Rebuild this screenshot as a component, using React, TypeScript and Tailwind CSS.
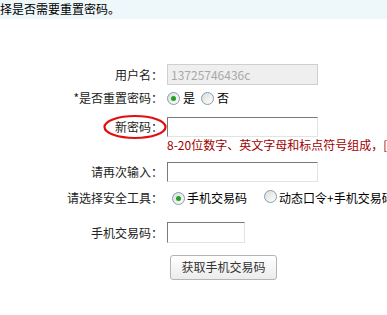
import React from "react";

const font = { fontFamily: '"Noto Sans CJK SC", "Liberation Sans", sans-serif' };

function Radio({ checked }: { checked?: boolean }) {
  return (
    <span className="inline-flex h-[13px] w-[13px] shrink-0 items-center justify-center rounded-full border border-[#7f9db9] bg-gradient-to-br from-[#dcdcd7] to-white">
      {checked && <span className="h-[5px] w-[5px] rounded-full bg-[#21a121]" />}
    </span>
  );
}

function Field({ label, children, className = "" }: { label: string; children: React.ReactNode; className?: string }) {
  return (
    <div className={`flex items-center ${className}`}>
      <div className="w-[163px] shrink-0 text-right text-[12px] text-[#222]">{label}</div>
      <div className="flex items-center pl-[4px]">{children}</div>
    </div>
  );
}

const inputCls =
  "h-[20px] border border-t-[#7a7a7a] border-l-[#7a7a7a] border-r-[#e3e3e3] border-b-[#e3e3e3] bg-white";

export default function App() {
  return (
    <div className="h-[315px] w-[387px] overflow-hidden bg-white" style={font}>
      <div className="h-[19px] bg-[#eef7fa] pt-[1px] text-[12px] leading-[16px] text-black whitespace-nowrap">
        择是否需要重置密码。
      </div>

      <div className="pt-[45px]">
        <Field label="用户名：" className="h-[21px]">
          <div className="flex h-[21px] w-[151px] items-center border border-[#cfcfcf] bg-[#efefef] px-[3px] text-[12px] text-[#a8a8a8]">
            13725746436c
          </div>
        </Field>

        <Field label="*是否重置密码：" className="mt-[3px] h-[20px]">
          <div className="flex items-center gap-[3px] text-[12px] text-black">
            <Radio checked />
            <span className="mr-[3px]">是</span>
            <Radio />
            <span>否</span>
          </div>
        </Field>

        <div className="relative">
          <Field label="新密码：" className="mt-[9px] h-[19px]">
            <div className={`${inputCls} w-[151px]`} />
          </Field>
          <svg className="pointer-events-none absolute left-[103px] top-[-3px]" width="64" height="26" viewBox="0 0 64 26">
            <ellipse cx="32" cy="13" rx="30.5" ry="11" fill="none" stroke="#e01010" strokeWidth="2.2" />
          </svg>
        </div>

        <div className="mt-[1px] h-[16px] whitespace-nowrap pl-[167px] text-[12px] leading-[16px] text-[#a00000]">
          8-20位数字、英文字母和标点符号组成，[
        </div>

        <Field label="请再次输入：" className="mt-[9px] h-[20px]">
          <div className={`${inputCls} w-[151px]`} />
        </Field>

        <Field label="请选择安全工具：" className="mt-[6px] h-[20px]">
          <div className="flex items-center whitespace-nowrap pl-[5px] text-[12px] text-black">
            <Radio checked />
            <span className="ml-[2px]">手机交易码</span>
            <span className="ml-[17px]">
              <Radio />
            </span>
            <span className="ml-[2px]">动态口令+手机交易码</span>
          </div>
        </Field>

        <Field label="手机交易码：" className="mt-[14px] h-[21px]">
          <div className={`${inputCls} h-[21px] w-[78px]`} />
        </Field>

        <div className="mt-[10px] pl-[170px]">
          <button className="h-[25px] w-[107px] rounded-[3px] border border-[#b4b4b4] bg-gradient-to-b from-white to-[#ececec] text-[12px] text-[#333]">
            获取手机交易码
          </button>
        </div>
      </div>
    </div>
  );
}
